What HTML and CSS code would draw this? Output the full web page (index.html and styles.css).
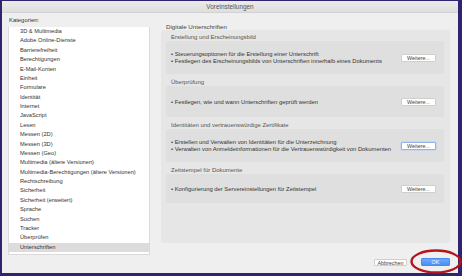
FILE: index.html
```html
<!DOCTYPE html>
<html lang="de">
<head>
<meta charset="utf-8">
<link rel="stylesheet" href="styles.css">
</head>
<body>
<div class="window">
  <div class="titlebar">Voreinstellungen</div>
  <div class="main">
    <div class="left">
      <div class="cat-label">Kategorien:</div>
      <ul class="list">
        <li>3D &amp; Multimedia</li>
        <li>Adobe Online-Dienste</li>
        <li>Barrierefreiheit</li>
        <li>Berechtigungen</li>
        <li>E-Mail-Konten</li>
        <li>Einheit</li>
        <li>Formulare</li>
        <li>Identität</li>
        <li>Internet</li>
        <li>JavaScript</li>
        <li>Lesen</li>
        <li>Messen (2D)</li>
        <li>Messen (3D)</li>
        <li>Messen (Geo)</li>
        <li>Multimedia (ältere Versionen)</li>
        <li>Multimedia-Berechtigungen (ältere Versionen)</li>
        <li>Rechtschreibung</li>
        <li>Sicherheit</li>
        <li>Sicherheit (erweitert)</li>
        <li>Sprache</li>
        <li>Suchen</li>
        <li>Tracker</li>
        <li>Überprüfen</li>
        <li class="selected">Unterschriften</li>
      </ul>
    </div>
    <div class="right">
      <div class="heading">Digitale Unterschriften</div>
      <div class="panel">
        <div class="section">
          <div class="sec-label">Erstellung und Erscheinungsbild</div>
          <div class="box tall">
            <div class="lines">
              <div>• Steuerungsoptionen für die Erstellung einer Unterschrift</div>
              <div>• Festlegen des Erscheinungsbilds von Unterschriften innerhalb eines Dokuments</div>
            </div>
            <button class="btn">Weitere...</button>
          </div>
        </div>
        <div class="section">
          <div class="sec-label">Überprüfung</div>
          <div class="box">
            <div class="lines">
              <div>• Festlegen, wie und wann Unterschriften geprüft werden</div>
            </div>
            <button class="btn">Weitere...</button>
          </div>
        </div>
        <div class="section">
          <div class="sec-label">Identitäten und vertrauenswürdige Zertifikate</div>
          <div class="box tall">
            <div class="lines">
              <div>• Erstellen und Verwalten von Identitäten für die Unterzeichnung</div>
              <div>• Verwalten von Anmeldeinformationen für die Vertrauenswürdigkeit von Dokumenten</div>
            </div>
            <button class="btn focus">Weitere...</button>
          </div>
        </div>
        <div class="section">
          <div class="sec-label">Zeitstempel für Dokumente</div>
          <div class="box short">
            <div class="lines">
              <div>• Konfigurierung der Servereinstellungen für Zeitstempel</div>
            </div>
            <button class="btn">Weitere...</button>
          </div>
        </div>
      </div>
    </div>
  </div>
  <div class="footer">
    <button class="btn cancel">Abbrechen</button>
    <button class="btn ok">OK</button>
  </div>
</div>
<svg class="mark" width="52" height="25" viewBox="0 0 52 25">
  <ellipse cx="26" cy="12.5" rx="24.5" ry="11" fill="none" stroke="#b3161a" stroke-width="2.4"/>
</svg>
</body>
</html>
```
FILE: styles.css
```css
* { box-sizing: border-box; }
html, body { margin: 0; height: 100%; }
body {
  background: #2f2470;
  padding: 1px 4px 3px 2px;
  font-family: "Liberation Sans", Arial, sans-serif;
  color: #333;
  position: relative;
}
.window {
  height: 100%;
  background: #efefef;
  display: flex;
  flex-direction: column;
}
.titlebar {
  height: 12px;
  flex: none;
  background: linear-gradient(#ebebeb, #dedede);
  border-bottom: 1px solid #d2d2d2;
  font-size: 6.4px;
  line-height: 11px;
  text-align: center;
  color: #555;
}
.main {
  flex: 1;
  display: flex;
  padding-left: 6px;
  padding-right: 8px;
  min-height: 0;
}
.left {
  width: 142px;
  display: flex;
  flex-direction: column;
  padding-top: 3px;
}
.cat-label {
  font-size: 5.9px;
  line-height: 8px;
  height: 12px;
  padding-left: 1px;
  color: #333;
}
.list {
  list-style: none;
  margin: 0;
  padding: 0 0 2px 0;
  flex: 1;
  background: #fff;
  border: 1px solid #dadada;
  border-top: none;
}
.list li {
  height: 9.38px;
  line-height: 9.38px;
  font-size: 5.7px;
  padding-left: 11px;
  color: #333;
  white-space: nowrap;
}
.list li.selected { background: #dcdcdc; }
.right {
  flex: 1;
  margin-left: 11px;
  display: flex;
  flex-direction: column;
  padding-top: 10px;
  padding-bottom: 12px;
}
.heading {
  font-size: 6.2px;
  line-height: 7px;
  height: 7px;
  padding-left: 5px;
  color: #444;
}
.panel {
  flex: 1;
  background: #e6e6e6;
  border-radius: 3px;
  padding: 4px 6px 0 5px;
  display: flex;
  flex-direction: column;
}
.section + .section { margin-top: 5px; }
.sec-label {
  font-size: 5.95px;
  line-height: 7px;
  height: 7px;
  padding-left: 5px;
  color: #555;
}
.box {
  height: 31px;
  background: #dfdfdf;
  border-radius: 3px;
  display: flex;
  align-items: center;
  padding: 1px 8px 0 5px;
}
.box.tall { height: 33px; }
.box.short { height: 29px; }
.lines {
  flex: 1;
  font-size: 5.85px;
  line-height: 7px;
  color: #333;
  white-space: nowrap;
}
.btn {
  font-family: inherit;
  font-size: 5.4px;
  line-height: 6px;
  height: 8px;
  width: 35px;
  padding: 0;
  background: #fff;
  border: 1px solid #cfcfcf;
  border-radius: 1px;
  color: #444;
}
.btn.focus {
  border: 1px solid #8fb2ea;
  box-shadow: 0 0 0 0.5px #b7cdf2;
}
.footer {
  flex: none;
  display: flex;
  justify-content: flex-end;
  gap: 14px;
  padding: 3px 8px 7px 0;
  height: 18px;
}
.btn.cancel { width: 33px; margin-top: 1px; height: 7px; }
.btn.ok {
  width: 29px;
  background: linear-gradient(#6aa9f8, #4a8ef4);
  border: 1px solid #4a8bee;
  color: #fff;
}
.mark {
  position: absolute;
  left: 410px;
  top: 249px;
}
```
